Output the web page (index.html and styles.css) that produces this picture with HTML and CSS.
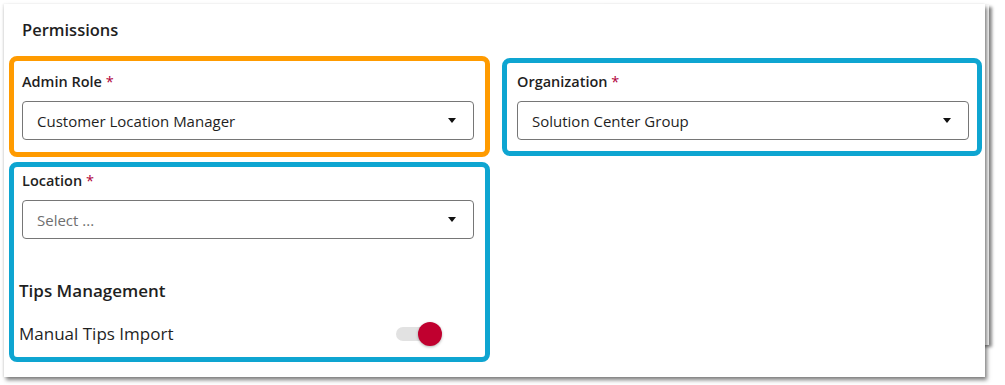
FILE: index.html
```html
<!DOCTYPE html>
<html lang="en">
<head>
    <meta charset="UTF-8">
    <meta name="viewport" content="width=device-width, initial-scale=1.0">
    <title>Permissions</title>
    <link rel="stylesheet" href="styles.css">
</head>
<body>
    <div class="page">
        <div class="card">
            <h2 class="card-title">Permissions</h2>
            <div class="grid">
                <div class="mark mark-orange first-row">
                    <label class="field-label">Admin Role <span class="req">*</span></label>
                    <div class="select">
                        <span>Customer Location Manager</span>
                        <span class="caret"></span>
                    </div>
                </div>
                <div class="mark mark-blue first-row org">
                    <label class="field-label">Organization <span class="req">*</span></label>
                    <div class="select">
                        <span>Solution Center Group</span>
                        <span class="caret"></span>
                    </div>
                </div>
                <div class="mark mark-blue location">
                    <label class="field-label">Location <span class="req">*</span></label>
                    <div class="select">
                        <span class="placeholder">Select ...</span>
                        <span class="caret"></span>
                    </div>
                    <h3 class="section-title">Tips Management</h3>
                    <div class="toggle-row">
                        <span>Manual Tips Import</span>
                        <span class="toggle"><span class="knob"></span></span>
                    </div>
                </div>
            </div>
        </div>
    </div>
</body>
</html>
```

FILE: styles.css
```css
body {
    margin: 0;
    background-color: #ffffff;
    font-family: 'Open Sans', 'Noto Sans', sans-serif;
    color: #1f1f1f;
}
.page {
    position: relative;
    padding: 4px 0 0 4px;
    width: 1005px;
    height: 385px;
    box-sizing: border-box;
}
/* panel peeking out behind the card */
.page::before {
    content: "";
    position: absolute;
    top: 5px;
    left: 600px;
    width: 389px;
    height: 340px;
    background: #ffffff;
    box-shadow: 3px 2px 3px rgba(0, 0, 0, 0.45);
}
.card {
    position: relative;
    width: 981px;
    height: 373px;
    box-sizing: border-box;
    background: #ffffff;
    box-shadow: 2px 3px 4px rgba(0, 0, 0, 0.5), -1px 0 2px rgba(0, 0, 0, 0.08);
    padding: 0 0 0 5px;
}
.card-title {
    margin: 0;
    padding: 15px 0 0 13px;
    height: 52px;
    box-sizing: border-box;
    font-size: 16.5px;
    font-weight: 600;
    line-height: 22px;
}
.grid {
    display: grid;
    grid-template-columns: 481px 480px;
    column-gap: 12px;
    row-gap: 5px;
    align-items: start;
}
.mark {
    border: 5px solid;
    border-radius: 8px;
    box-sizing: border-box;
}
.mark-orange {
    border-color: #ff9b00;
    padding: 0 11px 0 8px;
}
.mark-blue {
    border-color: #0ea5d1;
}
.first-row {
    height: 101px;
    padding-top: 11px;
}
.org {
    margin-top: 2px;
    height: 98px;
    padding: 9px 8px 0 10px;
}
.location {
    height: 200px;
    padding: 4px 11px 0 8px;
}
.field-label {
    display: block;
    font-size: 14.5px;
    font-weight: 600;
    line-height: 20px;
    margin-bottom: 9px;
}
.req {
    color: #b0003a;
    font-weight: 400;
}
.select {
    display: flex;
    align-items: center;
    justify-content: space-between;
    height: 39px;
    box-sizing: border-box;
    border: 1.5px solid #767676;
    border-radius: 4px;
    padding: 0 17px 0 14px;
    font-size: 15px;
}
.placeholder {
    color: #6f6f6f;
}
.caret {
    width: 0;
    height: 0;
    border-left: 4.5px solid transparent;
    border-right: 4.5px solid transparent;
    border-top: 5px solid #111111;
}
.section-title {
    margin: 40px 0 0 -3px;
    font-size: 17px;
    font-weight: 600;
    line-height: 24px;
}
.toggle-row {
    display: flex;
    align-items: center;
    margin: 19px 0 0 -3px;
    font-size: 17px;
    line-height: 24px;
}
.toggle {
    position: relative;
    margin-left: 223px;
    width: 34px;
    height: 14px;
    border-radius: 7px;
    background: #e2e2e2;
}
.knob {
    position: absolute;
    right: -12px;
    top: -5px;
    width: 24px;
    height: 24px;
    border-radius: 50%;
    background: #c0002f;
    box-shadow: 0 1px 3px rgba(0, 0, 0, 0.3);
}
```
